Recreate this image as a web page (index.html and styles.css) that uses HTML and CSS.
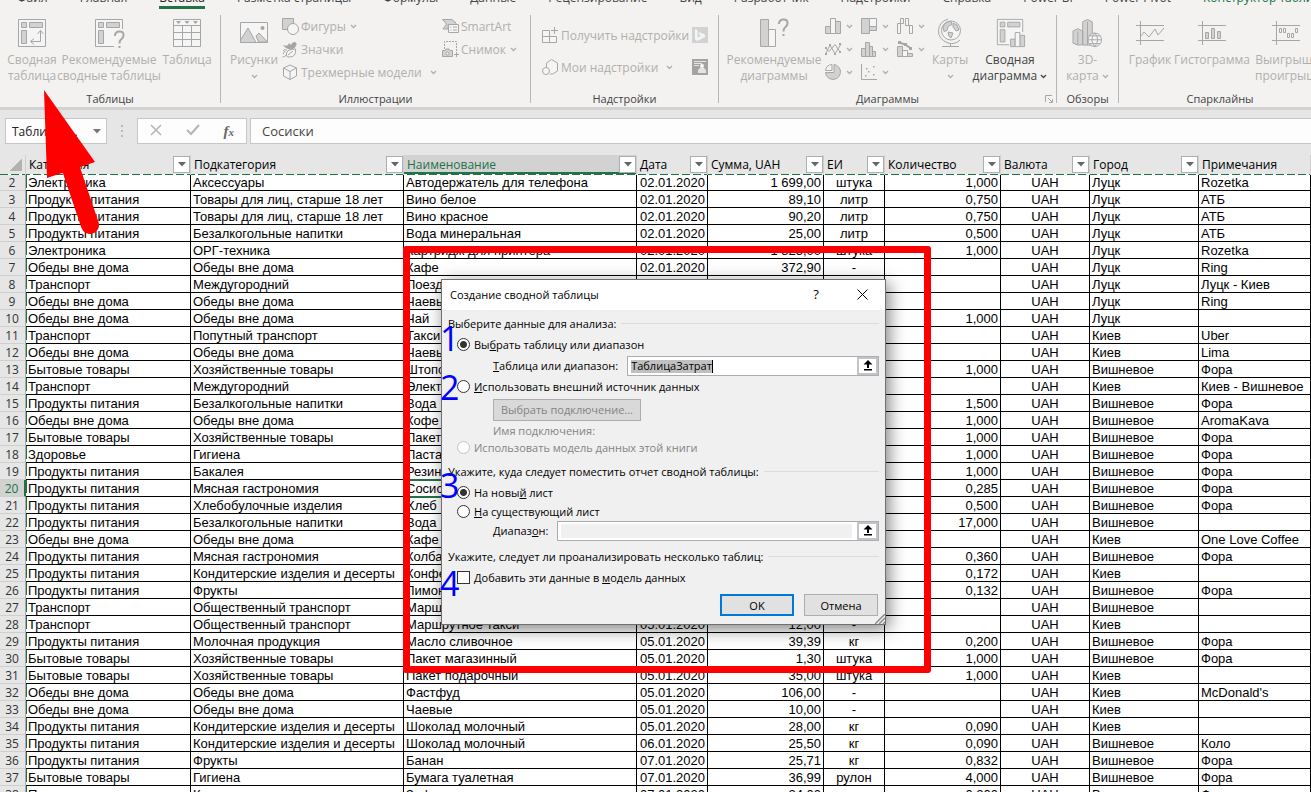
FILE: index.html
```html
<!DOCTYPE html>
<html lang="ru">
<head>
    <meta charset="UTF-8">
    <meta name="viewport" content="width=device-width, initial-scale=1.0">
    <title>Создание сводной таблицы</title>
    <link rel="stylesheet" href="styles.css">
</head>
<body>
    <svg class="defs" aria-hidden="true">
        <symbol id="chev" viewBox="0 0 7 5"><path d="M1 1l2.5 2.5L6 1" fill="none" stroke="currentColor" stroke-width="1.3"/></symbol>
        <symbol id="tri" viewBox="0 0 8 5"><path d="M0 0h8L4 4.500z" fill="currentColor"/></symbol>
        <symbol id="pick" viewBox="0 0 10 11"><path d="M5 0L.5 4.500H4V8h2V4.500h3.500zM1 9h8v1.500H1z" fill="#000"/></symbol>
    </svg>

    <nav class="tabs">
        <a href="#">Файл</a>
        <a href="#">Главная</a>
        <a href="#" class="current">Вставка</a>
        <a href="#">Разметка страницы</a>
        <a href="#">Формулы</a>
        <a href="#">Данные</a>
        <a href="#">Рецензирование</a>
        <a href="#">Вид</a>
        <a href="#">Разработчик</a>
        <a href="#">Надстройки</a>
        <a href="#">Справка</a>
        <a href="#">Power BI</a>
        <a href="#">Power Pivot</a>
        <a href="#" class="context">Конструктор таблиц</a>
    </nav>

    <div class="ribbon">
        <section class="group tables">
            <div class="tools">
                <button class="big" disabled>
                    <svg width="30" height="30" viewBox="0 0 30 30"><path class="p" d="M1.500 1.500h27v27h-27z"/><path class="f" d="M4.500 4.500h5v5h-5zM12.500 4.500h13v5h-13zM4.500 12.500h5v13h-5z"/><path class="l" d="M23.500 13v10.500H14M20.500 16l3-3.500 3 3.500M17 20.500l-3.500 3 3.500 3"/></svg>
                    <span>Сводная таблица</span>
                </button>
                <button class="big" disabled>
                    <svg width="30" height="30" viewBox="0 0 30 30"><path class="p" d="M20 28.500H1.500v-27h27V11"/><path class="f" d="M4.500 4.500h5v5h-5zM12.500 4.500h13v5h-13zM4.500 12.500h5v13h-5z"/><path class="l w" d="M21 18q0-4.500 4.500-4.500t4 4q0 2-2.500 4-1.500 1-1.500 4M25.500 28v2"/></svg>
                    <span>Рекомендуемые сводные таблицы</span>
                </button>
                <button class="big" disabled>
                    <svg width="30" height="30" viewBox="0 0 30 30"><path class="p" d="M1.500 1.500h27v27h-27zM1.500 7.500h27M1.500 14.500h27M1.500 21.500h27M10.500 7.500v21M19.500 7.500v21"/><path class="s" d="M4 3h5L6.500 6zM12.500 3h5L15 6zM21 3h5l-2.500 3z"/></svg>
                    <span>Таблица</span>
                </button>
            </div>
            <h2>Таблицы</h2>
        </section>

        <section class="group pictures">
            <div class="tools">
                <button class="big" disabled>
                    <svg width="30" height="30" viewBox="0 0 30 30"><path class="p" d="M1.500 4.500h27v20h-27z"/><path class="f" d="M1.500 22L9 10l8 14.500H1.500zM17 18l3-3 8.500 9h-9z"/><circle class="s" cx="23.500" cy="10" r="2"/></svg>
                    <span>Рисунки</span>
                    <svg class="chev"><use href="#chev"/></svg>
                </button>
                <div class="stack">
                    <button disabled><svg width="17" height="17" viewBox="0 0 17 17"><path class="f" d="M.5.5h11v11H.5z"/><circle class="p" cx="11" cy="11" r="5.500"/></svg>Фигуры<svg class="chev"><use href="#chev"/></svg></button>
                    <button disabled><svg width="17" height="17" viewBox="0 0 17 17"><path class="s" d="M7 2l2 2q1-3 4-3 2 1 1.500 3-1 3-4 4Q4 9 1 4q3 1 5 0z"/><path class="p" d="M4.500 15Q3 8 13.500 8q1 8-6 8-2 0-3-1zM6 14l5-4"/><path class="l" d="M.5 16q2 0 4-2M1 10q1-2 4-1M1 13l2-3"/></svg>Значки</button>
                    <button disabled><svg width="17" height="17" viewBox="0 0 17 17"><path class="p" d="M8 1l6.500 3v8L8 15.500 1.500 12V4zM1.500 4L8 7.500 14.500 4M8 7.500v8"/></svg>Трехмерные модели<svg class="chev far"><use href="#chev"/></svg></button>
                </div>
                <div class="stack">
                    <button disabled><svg width="17" height="17" viewBox="0 0 17 17"><path class="f" d="M.5 1.500H10L14 5v2H6v4H1l3.500-5z"/><path class="p" d="M6.500 6.500h10v8h-10zM8.500 9h1M11 9h4M8.500 12h1M11 12h4"/></svg>SmartArt</button>
                    <button disabled><svg width="17" height="17" viewBox="0 0 17 17"><path class="l" d="M2.500 8V.5h12v10" stroke-dasharray="2 1"/><path class="f" d="M.5 9.500H3L4 8h3l1 1.500h2.500v6H.5z"/><circle class="p" cx="5.500" cy="12.500" r="1.500"/><path class="l" d="M14.500 11v5M12 13.500h5"/></svg>Снимок<svg class="chev"><use href="#chev"/></svg></button>
                </div>
            </div>
            <h2>Иллюстрации</h2>
        </section>

        <section class="group addins">
            <div class="tools">
                <button disabled><svg width="17" height="17" viewBox="0 0 17 17"><path class="p" d="M.5 3.500h7v6h-7zM.5 9.500h7v6h-7zM7.500 9.500h7v6h-7z"/><path class="l" d="M12.500 0v7M9 3.500h7"/></svg>Получить надстройки</button>
                <button disabled aria-label="Карты Bing"><svg width="16" height="16" viewBox="0 0 16 16"><path fill="#d2d2d2" d="M0 0h16v16H0z"/><path fill="#f5f5f5" d="M3 2l2.500 1v7.500L9 9 7.500 8l-1-3L13 7.500V10l-7.500 4L3 12.500z"/></svg></button>
                <button disabled><svg width="17" height="17" viewBox="0 0 17 17"><path class="p" d="M4.500 8V4l5-3.500L15.500 4v8l-5 3H8"/><circle class="p" cx="4" cy="12" r="3.500"/></svg>Мои надстройки<svg class="chev far"><use href="#chev"/></svg></button>
                <button disabled aria-label="Люди"><svg width="16" height="16" viewBox="0 0 16 16"><path fill="#a3a3a3" d="M0 0h16v16H0z"/><path fill="#e4e4e4" d="M2 2h12v1H2zM2 4h8v1H2zM2 6h5v1H2zM6 14v-3l2-2h4l2 2v3z"/><circle fill="#fff" cx="10" cy="7" r="2"/></svg></button>
            </div>
            <h2>Надстройки</h2>
        </section>

        <section class="group charts">
            <div class="tools">
                <button class="big" disabled>
                    <svg width="30" height="30" viewBox="0 0 30 30"><path class="f" d="M1.500 1.500h8v27h-8z"/><path class="p" d="M9.500 11.500h7v17h-7z"/><path class="l w" d="M20 6q0-4.500 4.500-4.500t4 4q0 2-2.500 4-1.500 1-1.500 4M24.500 16v2"/></svg>
                    <span>Рекомендуемые диаграммы</span>
                </button>
                <div class="minis">
                    <button disabled aria-label="Гистограмма"><svg width="17" height="17" viewBox="0 0 17 17"><path class="f" d="M.5 8.500h5v7h-5zM10.500 3.500h5v12h-5z"/><path class="p" d="M5.500.5h5v15h-5z"/></svg><svg class="chev"><use href="#chev"/></svg></button>
                    <button disabled aria-label="Иерархическая"><svg width="17" height="17" viewBox="0 0 17 17"><path class="f" d="M.5.5h8v15h-8z"/><path class="p" d="M8.500.5h7v8h-7z"/><path class="f" d="M8.500 8.500h7v4h-7z"/></svg><svg class="chev"><use href="#chev"/></svg></button>
                    <button disabled aria-label="Каскадная"><svg width="17" height="17" viewBox="0 0 17 17"><path class="p" d="M.5 15.500v-10h3V.5h3v5h-3v10zM8.500.5h3v7h4v8h-3v-8h-4z"/></svg><svg class="chev"><use href="#chev"/></svg></button>
                    <button disabled aria-label="График"><svg width="17" height="17" viewBox="0 0 17 17"><path class="l" d="M.5 13L5 4l5 9 6-10"/><path class="l" d="M.5 7L4 10.500l6-7 5.500 8"/><path class="s" d="M0 12h2v2H0zM4 3h2v2H4zM9 12h2v2H9zM14 2h2v2h-2zM0 6h2v2H0zM14 10h2v2h-2z"/></svg><svg class="chev"><use href="#chev"/></svg></button>
                    <button disabled aria-label="Статистическая"><svg width="17" height="17" viewBox="0 0 17 17"><path class="f" d="M.5 7.500h4v8h-4zM4.500 1.500h4v14h-4zM8.500 5.500h3v10h-3zM11.500 10.500h3v5h-3z"/></svg><svg class="chev"><use href="#chev"/></svg></button>
                    <button disabled aria-label="Комбинированная"><svg width="17" height="17" viewBox="0 0 17 17"><path class="f" d="M.5 5.500h5v10h-5zM10.500 12.500h5v3h-5z"/><path class="p" d="M5.500 9.500h5v6h-5z"/><path class="l w" d="M2 1.500l6 2 6 4"/><path class="s" d="M1 0h3v3H1zM7 2h3v3H7zM12 6h3v3h-3z"/></svg><svg class="chev"><use href="#chev"/></svg></button>
                    <button disabled aria-label="Круговая"><svg width="17" height="17" viewBox="0 0 17 17"><path class="f" d="M9 .5a7.500 7.500 0 1 1-8.500 8H9z"/><path class="p" d="M7 .5v6H.5Q1 1 7 .5z"/></svg><svg class="chev"><use href="#chev"/></svg></button>
                    <button disabled aria-label="Точечная"><svg width="17" height="17" viewBox="0 0 17 17"><path class="l" d="M.5 0v15.500H16"/><path class="s" d="M4 11h1.500v1.500H4zM7 7h1.500v1.500H7zM5 4h1.500v1.500H5zM12 2h1.500v1.500H12zM12 10h1.500v1.500H12z"/></svg><svg class="chev"><use href="#chev"/></svg></button>
                </div>
                <button class="big" disabled>
                    <svg width="30" height="30" viewBox="0 0 30 30"><circle class="p" cx="16" cy="12.500" r="9.500"/><path class="f" d="M8 9q3-6 8-5.500l1 3-4 2-1 4-3 1zM18 5l4 2 2 5-3 1-3-4zM13 14l5 1-2 5q-3-1-3-6z"/><path class="l" d="M13 1Q4 4 3.500 12.500T13 25q7 2 12-3M15.500 25v3M7 28.500h17"/></svg>
                    <span>Карты</span>
                    <svg class="chev"><use href="#chev"/></svg>
                </button>
                <button class="big dark">
                    <svg width="31" height="32" viewBox="0 0 31 32"><path class="p" d="M14 28.500H1.500v-27h27V15"/><path class="f" d="M4.500 4.500h5v5h-5zM12.500 4.500h13v5h-13zM4.500 12.500h5v13h-5zM15.500 22.500h5v8h-5zM25.500 18.500h5v12h-5z"/><path class="p" d="M20.500 15.500h5v15h-5z"/></svg>
                    <span>Сводная диаграмма&nbsp;<svg class="chev"><use href="#chev"/></svg></span>
                </button>
            </div>
            <h2>Диаграммы</h2>
            <button class="launcher" aria-label="Все диаграммы"><svg width="8" height="8" viewBox="0 0 8 8"><path class="l" d="M.5 7V.5H7M3 3l4 4M7.500 4v3.500H4"/></svg></button>
        </section>

        <section class="group tours">
            <div class="tools">
                <button class="big" disabled>
                    <svg width="31" height="31" viewBox="0 0 31 31"><path class="f" d="M.5 13.500l5-2.500 5 2.500v14l-5 .5-5-2zM10.500 4l5-2.500 5 2.500v24h-10z"/><path class="l" d="M5.500 14v14M15.500 4v24"/><circle class="p" cx="23" cy="22.500" r="7"/><path class="l" d="M16 22.500h14M17.500 18.500h11M17.500 26.500h11M23 15.500q-6 7 0 14 6-7 0-14z"/></svg>
                    <span>3D-<br>карта&nbsp;<svg class="chev"><use href="#chev"/></svg></span>
                </button>
            </div>
            <h2>Обзоры</h2>
        </section>

        <section class="group sparks">
            <div class="tools">
                <button class="big" disabled>
                    <svg width="30" height="30" viewBox="0 0 30 30"><path class="l" d="M1 7.500h28M1 22.500h28M5.500 3v24M6 18l3-4 5 5 6-8 3 6 6-7"/></svg>
                    <span>График</span>
                </button>
                <button class="big" disabled>
                    <svg width="30" height="30" viewBox="0 0 30 30"><path class="l" d="M1 7.500h28M1 22.500h28M5.500 3v24"/><path class="f" d="M8.500 14.500h3v6h-3zM14.500 10.500h3v10h-3zM20.500 13.500h3v7h-3z"/></svg>
                    <span>Гистограмма</span>
                </button>
                <button class="big" disabled>
                    <svg width="30" height="30" viewBox="0 0 30 30"><path class="l" d="M1 7.500h28M1 22.500h28M5.500 3v24M8.500 10.500h2v4h-2zM12.500 10.500h2v4h-2zM16.500 15.500h2v4h-2zM20.500 15.500h2v4h-2zM24.500 10.500h2v4h-2z"/></svg>
                    <span>Выигрыш/ проигрыш</span>
                </button>
            </div>
            <h2>Спарклайны</h2>
        </section>
    </div>

    <div class="formula-bar">
        <div class="name-box">
            <input type="text" value="ТаблицаЗ..." aria-label="Имя">
            <button aria-label="Список имен"><svg width="8" height="5"><use href="#tri"/></svg></button>
        </div>
        <span class="grip"></span>
        <div class="fx-buttons">
            <button aria-label="Отмена ввода" disabled><svg width="12" height="12" viewBox="0 0 12 12"><path d="M1 1l10 10M11 1L1 11" stroke="#b5b5b5" stroke-width="1.500"/></svg></button>
            <button aria-label="Ввод" disabled><svg width="14" height="12" viewBox="0 0 14 12"><path d="M1 6l4 4 8-9" fill="none" stroke="#b5b5b5" stroke-width="2"/></svg></button>
            <button class="fx" aria-label="Вставить функцию">f<small>x</small></button>
        </div>
        <input class="formula" type="text" value="Сосиски" aria-label="Строка формул">
    </div>

    <table class="sheet">
        <colgroup>
            <col class="c-num"><col class="c-cat"><col class="c-sub"><col class="c-name"><col class="c-date"><col class="c-sum"><col class="c-unit"><col class="c-qty"><col class="c-cur"><col class="c-city"><col>
        </colgroup>
        <thead>
            <tr>
                <th class="corner"></th>
                <th><div>Категория<button aria-label="Фильтр"><svg width="8" height="5"><use href="#tri"/></svg></button></div></th>
                <th><div>Подкатегория<button aria-label="Фильтр"><svg width="8" height="5"><use href="#tri"/></svg></button></div></th>
                <th class="active"><div>Наименование<button aria-label="Фильтр"><svg width="8" height="5"><use href="#tri"/></svg></button></div></th>
                <th><div>Дата<button aria-label="Фильтр"><svg width="8" height="5"><use href="#tri"/></svg></button></div></th>
                <th><div>Сумма, UAH<button aria-label="Фильтр"><svg width="8" height="5"><use href="#tri"/></svg></button></div></th>
                <th><div>ЕИ<button aria-label="Фильтр"><svg width="8" height="5"><use href="#tri"/></svg></button></div></th>
                <th><div>Количество<button aria-label="Фильтр"><svg width="8" height="5"><use href="#tri"/></svg></button></div></th>
                <th><div>Валюта<button aria-label="Фильтр"><svg width="8" height="5"><use href="#tri"/></svg></button></div></th>
                <th><div>Город<button aria-label="Фильтр"><svg width="8" height="5"><use href="#tri"/></svg></button></div></th>
                <th><div>Примечания</div></th>
            </tr>
        </thead>
        <tbody>
            <tr><th>2</th><td>Электроника</td><td>Аксессуары</td><td>Автодержатель для телефона</td><td>02.01.2020</td><td>1 699,00</td><td>штука</td><td>1,000</td><td>UAH</td><td>Луцк</td><td>Rozetka</td></tr>
            <tr><th>3</th><td>Продукты питания</td><td>Товары для лиц, старше 18 лет</td><td>Вино белое</td><td>02.01.2020</td><td>89,10</td><td>литр</td><td>0,750</td><td>UAH</td><td>Луцк</td><td>АТБ</td></tr>
            <tr><th>4</th><td>Продукты питания</td><td>Товары для лиц, старше 18 лет</td><td>Вино красное</td><td>02.01.2020</td><td>90,20</td><td>литр</td><td>0,750</td><td>UAH</td><td>Луцк</td><td>АТБ</td></tr>
            <tr><th>5</th><td>Продукты питания</td><td>Безалкогольные напитки</td><td>Вода минеральная</td><td>02.01.2020</td><td>25,00</td><td>литр</td><td>0,500</td><td>UAH</td><td>Луцк</td><td>АТБ</td></tr>
            <tr><th>6</th><td>Электроника</td><td>ОРГ-техника</td><td>Картридж для принтера</td><td>02.01.2020</td><td>1 825,00</td><td>штука</td><td>1,000</td><td>UAH</td><td>Луцк</td><td>Rozetka</td></tr>
            <tr><th>7</th><td>Обеды вне дома</td><td>Обеды вне дома</td><td>Кафе</td><td>02.01.2020</td><td>372,90</td><td>-</td><td></td><td>UAH</td><td>Луцк</td><td>Ring</td></tr>
            <tr><th>8</th><td>Транспорт</td><td>Междугородний</td><td>Поезд</td><td>02.01.2020</td><td>153,70</td><td>-</td><td></td><td>UAH</td><td>Луцк</td><td>Луцк - Киев</td></tr>
            <tr><th>9</th><td>Обеды вне дома</td><td>Обеды вне дома</td><td>Чаевые</td><td></td><td></td><td></td><td></td><td>UAH</td><td>Луцк</td><td>Ring</td></tr>
            <tr><th>10</th><td>Обеды вне дома</td><td>Обеды вне дома</td><td>Чай</td><td></td><td></td><td></td><td>1,000</td><td>UAH</td><td>Луцк</td><td></td></tr>
            <tr><th>11</th><td>Транспорт</td><td>Попутный транспорт</td><td>Такси</td><td></td><td></td><td></td><td></td><td>UAH</td><td>Киев</td><td>Uber</td></tr>
            <tr><th>12</th><td>Обеды вне дома</td><td>Обеды вне дома</td><td>Чаевые</td><td></td><td></td><td></td><td></td><td>UAH</td><td>Киев</td><td>Lima</td></tr>
            <tr><th>13</th><td>Бытовые товары</td><td>Хозяйственные товары</td><td>Штопор</td><td></td><td></td><td></td><td>1,000</td><td>UAH</td><td>Вишневое</td><td>Фора</td></tr>
            <tr><th>14</th><td>Транспорт</td><td>Междугородний</td><td>Электричка</td><td></td><td></td><td></td><td></td><td>UAH</td><td>Киев</td><td>Киев - Вишневое</td></tr>
            <tr><th>15</th><td>Продукты питания</td><td>Безалкогольные напитки</td><td>Вода</td><td></td><td></td><td></td><td>1,500</td><td>UAH</td><td>Вишневое</td><td>Фора</td></tr>
            <tr><th>16</th><td>Обеды вне дома</td><td>Обеды вне дома</td><td>Кофе</td><td></td><td></td><td></td><td>1,000</td><td>UAH</td><td>Вишневое</td><td>AromaKava</td></tr>
            <tr><th>17</th><td>Бытовые товары</td><td>Хозяйственные товары</td><td>Пакет</td><td></td><td></td><td></td><td>1,000</td><td>UAH</td><td>Вишневое</td><td>Фора</td></tr>
            <tr><th>18</th><td>Здоровье</td><td>Гигиена</td><td>Паста</td><td></td><td></td><td></td><td>1,000</td><td>UAH</td><td>Вишневое</td><td>Фора</td></tr>
            <tr><th>19</th><td>Продукты питания</td><td>Бакалея</td><td>Резинка</td><td></td><td></td><td></td><td>1,000</td><td>UAH</td><td>Вишневое</td><td>Фора</td></tr>
            <tr class="active"><th>20</th><td>Продукты питания</td><td>Мясная гастрономия</td><td class="cursor">Сосиски</td><td></td><td></td><td></td><td>0,285</td><td>UAH</td><td>Вишневое</td><td>Фора</td></tr>
            <tr><th>21</th><td>Продукты питания</td><td>Хлебобулочные изделия</td><td>Хлеб</td><td></td><td></td><td></td><td>0,500</td><td>UAH</td><td>Вишневое</td><td>Фора</td></tr>
            <tr><th>22</th><td>Продукты питания</td><td>Безалкогольные напитки</td><td>Вода</td><td></td><td></td><td></td><td>17,000</td><td>UAH</td><td>Вишневое</td><td></td></tr>
            <tr><th>23</th><td>Обеды вне дома</td><td>Обеды вне дома</td><td>Кафе</td><td></td><td></td><td></td><td></td><td>UAH</td><td>Киев</td><td>One Love Coffee</td></tr>
            <tr><th>24</th><td>Продукты питания</td><td>Мясная гастрономия</td><td>Колбаса</td><td></td><td></td><td></td><td>0,360</td><td>UAH</td><td>Вишневое</td><td>Фора</td></tr>
            <tr><th>25</th><td>Продукты питания</td><td>Кондитерские изделия и десерты</td><td>Конфеты</td><td></td><td></td><td></td><td>0,172</td><td>UAH</td><td>Киев</td><td></td></tr>
            <tr><th>26</th><td>Продукты питания</td><td>Фрукты</td><td>Лимон</td><td></td><td></td><td></td><td>0,132</td><td>UAH</td><td>Вишневое</td><td>Фора</td></tr>
            <tr><th>27</th><td>Транспорт</td><td>Общественный транспорт</td><td>Маршрутное такси</td><td></td><td></td><td></td><td></td><td>UAH</td><td>Вишневое</td><td></td></tr>
            <tr><th>28</th><td>Транспорт</td><td>Общественный транспорт</td><td>Маршрутное такси</td><td>05.01.2020</td><td>12,00</td><td>-</td><td></td><td>UAH</td><td>Киев</td><td></td></tr>
            <tr><th>29</th><td>Продукты питания</td><td>Молочная продукция</td><td>Масло сливочное</td><td>05.01.2020</td><td>39,39</td><td>кг</td><td>0,200</td><td>UAH</td><td>Вишневое</td><td>Фора</td></tr>
            <tr><th>30</th><td>Бытовые товары</td><td>Хозяйственные товары</td><td>Пакет магазинный</td><td>05.01.2020</td><td>1,30</td><td>штука</td><td>1,000</td><td>UAH</td><td>Вишневое</td><td>Фора</td></tr>
            <tr><th>31</th><td>Бытовые товары</td><td>Хозяйственные товары</td><td>Пакет подарочный</td><td>05.01.2020</td><td>35,00</td><td>штука</td><td>1,000</td><td>UAH</td><td>Киев</td><td></td></tr>
            <tr><th>32</th><td>Обеды вне дома</td><td>Обеды вне дома</td><td>Фастфуд</td><td>05.01.2020</td><td>106,00</td><td>-</td><td></td><td>UAH</td><td>Киев</td><td>McDonald's</td></tr>
            <tr><th>33</th><td>Обеды вне дома</td><td>Обеды вне дома</td><td>Чаевые</td><td>05.01.2020</td><td>10,00</td><td>-</td><td></td><td>UAH</td><td>Киев</td><td></td></tr>
            <tr><th>34</th><td>Продукты питания</td><td>Кондитерские изделия и десерты</td><td>Шоколад молочный</td><td>05.01.2020</td><td>28,00</td><td>кг</td><td>0,090</td><td>UAH</td><td>Киев</td><td></td></tr>
            <tr><th>35</th><td>Продукты питания</td><td>Кондитерские изделия и десерты</td><td>Шоколад молочный</td><td>06.01.2020</td><td>25,50</td><td>кг</td><td>0,090</td><td>UAH</td><td>Вишневое</td><td>Коло</td></tr>
            <tr><th>36</th><td>Продукты питания</td><td>Фрукты</td><td>Банан</td><td>07.01.2020</td><td>25,71</td><td>кг</td><td>0,832</td><td>UAH</td><td>Вишневое</td><td>Фора</td></tr>
            <tr><th>37</th><td>Бытовые товары</td><td>Гигиена</td><td>Бумага туалетная</td><td>07.01.2020</td><td>36,99</td><td>рулон</td><td>4,000</td><td>UAH</td><td>Вишневое</td><td>Фора</td></tr>
            <tr><th>38</th><td>Продукты питания</td><td>Кондитерские изделия и десерты</td><td>Зефир</td><td>07.01.2020</td><td>24,00</td><td>кг</td><td>0,200</td><td>UAH</td><td>Вишневое</td><td>Фора</td></tr>
        </tbody>
    </table>

    <form class="dialog" role="dialog" aria-labelledby="dialogTitle">
        <header>
            <h1 id="dialogTitle">Создание сводной таблицы</h1>
            <button type="button" aria-label="Справка">?</button>
            <button type="button" aria-label="Закрыть"><svg width="11" height="11" viewBox="0 0 11 11"><path d="M.5.5l10 10M10.500.5l-10 10" stroke="#000"/></svg></button>
        </header>
        <div class="content">
            <section>
                <h3>Выберите данные для анализа:</h3>
                <label class="row"><input type="radio" name="source" checked><span>Вы<u>б</u>рать таблицу или диапазон</span></label>
                <div class="row sub">
                    <label for="range"><u>Т</u>аблица или диапазон:</label>
                    <div class="ref"><input id="range" class="selected" type="text" value="ТаблицаЗатрат"><button type="button" aria-label="Свернуть"><svg width="10" height="11"><use href="#pick"/></svg></button></div>
                </div>
                <label class="row"><input type="radio" name="source"><span><u>И</u>спользовать внешний источник данных</span></label>
                <div class="row sub tall"><button type="button" class="push" disabled>Выбрать подключение...</button></div>
                <div class="row sub low off">Имя подключения:</div>
                <label class="row low off"><input type="radio" name="source" disabled><span>Использовать модель данных этой книги</span></label>
            </section>
            <section>
                <h3>Укажите, куда следует поместить отчет сводной таблицы:</h3>
                <label class="row"><input type="radio" name="place" checked><span>На новы<u>й</u> лист</span></label>
                <label class="row low"><input type="radio" name="place"><span><u>Н</u>а существующий лист</span></label>
                <div class="row sub">
                    <label for="place">Диапаз<u>о</u>н:</label>
                    <div class="ref"><input id="place" class="empty" type="text"><button type="button" aria-label="Свернуть"><svg width="10" height="11"><use href="#pick"/></svg></button></div>
                </div>
            </section>
            <section>
                <h3>Укажите, следует ли проанализировать несколько таблиц:</h3>
                <label class="row"><input type="checkbox"><span>Добавить эти данные в <u>м</u>одель данных</span></label>
            </section>
            <footer>
                <button type="button" class="push ok">OK</button>
                <button type="button" class="push">Отмена</button>
            </footer>
        </div>
        <svg class="resize" width="10" height="10" viewBox="0 0 10 10"><path d="M0 10L10 0M4 10l6-6M8 10l2-2" stroke="#8a8a8a" stroke-width="1.500"/></svg>
    </form>

    <!-- tutorial marks drawn over the window -->
    <div class="mark-frame"></div>
    <svg class="mark-arrow" width="60" height="146" viewBox="0 0 60 146"><path d="M4 0l51 72L7 88z" fill="#f00"/><path d="M30 76l20 59" stroke="#f00" stroke-width="18" stroke-linecap="round"/></svg>
    <span class="mark-step one">1</span>
    <span class="mark-step two">2</span>
    <span class="mark-step three">3</span>
    <span class="mark-step four">4</span>
</body>
</html>
```

FILE: styles.css
```css
* {
    box-sizing: border-box;
}
body {
    margin: 0;
    height: 100vh;
    position: relative;
    overflow: hidden;
    background: #e6e6e6;
    font-family: "Open Sans", "Noto Sans", sans-serif;
    font-size: 12px;
    color: #444;
}
button, input {
    font: inherit;
    color: inherit;
    margin: 0;
}
button {
    background: none;
    border: 0;
    padding: 0;
}
svg {
    flex: none;
}
.defs {
    display: none;
}

/* tabs */
.tabs {
    display: flex;
    align-items: flex-end;
    gap: 32px;
    height: 9px;
    padding-left: 17px;
    overflow: hidden;
    background: #f3f2f1;
}
.tabs a {
    flex: none;
    color: #444;
    text-decoration: none;
    line-height: 16px;
    border-bottom: 3px solid transparent;
}
.tabs .current {
    border-color: #217346;
    color: #222;
}
.tabs .context {
    color: #217346;
}

/* ribbon */
.ribbon {
    display: flex;
    height: 101px;
    padding: 6px 0 4px;
    overflow: hidden;
    background: #f3f2f1;
    border-bottom: 3px solid #d2d2d2;
}
.group {
    flex: none;
    position: relative;
    display: flex;
    flex-direction: column;
    justify-content: space-between;
    border-right: 1px solid #b8b6b4;
}
.group h2 {
    margin: 0;
    font-size: 11px;
    font-weight: normal;
    line-height: 8px;
    text-align: center;
}
.group button {
    display: flex;
    align-items: center;
    gap: 2px;
    color: #b1afad;
    white-space: nowrap;
}
.group .tools {
    display: grid;
    align-items: start;
}
.group .big {
    flex-direction: column;
    gap: 0;
    padding-top: 3px;
    line-height: 16px;
    white-space: normal;
}
.big > svg:first-child {
    height: 30px;
    margin-bottom: 4px;
    overflow: visible;
}
.big > .chev {
    margin-top: 6px;
}
.group .dark {
    color: #444;
}
.chev {
    width: 7px;
    height: 5px;
    margin-left: 2px;
}
.big .chev {
    margin-left: 0;
    vertical-align: middle;
}
.chev.far {
    margin-left: 6px;
}
.tables .tools {
    grid-template-columns: 46px 108px 48px;
    padding: 0 9px;
}
.pictures .tools {
    grid-template-columns: 48px 156px 78px;
    gap: 4px;
    padding: 0 10px 0 9px;
}
.addins .tools {
    grid-template-columns: 146px 16px;
    gap: 16px 4px;
    padding: 12px 10px 0 11px;
}
.addins .tools button {
    height: 16px;
}
.charts .tools {
    grid-template-columns: 92px 108px 36px 80px;
    column-gap: 2px;
    padding: 0 6px 0 9px;
}
.tours .tools {
    grid-template-columns: 61px;
}
.sparks .tools {
    grid-template-columns: 46px 78px 70px;
    padding-left: 8px;
}
.stack {
    display: grid;
}
.stack button {
    height: 23px;
}
.minis {
    display: grid;
    grid-template-columns: repeat(3, 36px);
    grid-auto-rows: 23px;
    padding-left: 3px;
}
.launcher {
    position: absolute;
    right: 3px;
    bottom: 0;
}
.p, .f, .l {
    stroke: #a6a6a6;
}
.p {
    fill: #f5f5f5;
}
.f {
    fill: #d2d2d2;
}
.l {
    fill: none;
}
.s {
    fill: #a6a6a6;
}
.w {
    stroke-width: 2;
}

/* formula bar */
.formula-bar {
    display: flex;
    height: 45px;
    padding: 8px 0 11px 5px;
    font-size: 13px;
}
.formula-bar > div, .formula {
    display: flex;
    align-items: center;
    background: #fdfdfd;
    border: 1px solid #c6c6c6;
}
.name-box {
    width: 102px;
    padding-right: 5px;
    color: #222;
}
.name-box input {
    flex: 1;
    min-width: 0;
    border: 0;
    padding: 0 0 0 6px;
    background: none;
    font-size: 12px;
}
.name-box svg {
    color: #777;
    display: block;
}
.grip {
    width: 2px;
    margin: 7px 14px;
    background: repeating-linear-gradient(#b8b8b8 0 2px, transparent 2px 5px);
}
.fx-buttons {
    width: 110px;
    justify-content: space-around;
}
.fx {
    font-family: "Liberation Serif", serif;
    font-style: italic;
    font-weight: bold;
    font-size: 15px;
    color: #666;
}
.fx small {
    font-size: 11px;
}
.formula {
    flex: 1;
    margin-left: 3px;
    padding: 0 11px;
    border-right: 0;
}

/* sheet */
.sheet {
    width: 100%;
    table-layout: fixed;
    border-collapse: separate;
    border-spacing: 0;
    background: #fff;
    font-family: "Liberation Sans", Arial, sans-serif;
    font-size: 13px;
    color: #000;
}
.c-num { width: 26px; }
.c-cat { width: 165px; }
.c-sub { width: 213px; }
.c-name { width: 233px; }
.c-date { width: 71px; }
.c-sum { width: 116px; }
.c-unit { width: 61px; }
.c-qty { width: 116px; }
.c-cur { width: 89px; }
.c-city { width: 109px; }
.sheet td, .sheet th {
    padding: 1px 2px 0;
    height: 17px;
    line-height: 15px;
    white-space: nowrap;
    overflow: hidden;
    font-weight: normal;
}
.sheet td {
    border-right: 1px solid #000;
    border-bottom: 1px solid #000;
}
.sheet td:nth-child(2) {
    background: repeating-linear-gradient(#217346 0 13px, #fff 13px 17px) 0 0 / 1px 100% no-repeat;
}
.sheet td:nth-child(5), .sheet td:nth-child(6), .sheet td:nth-child(8) {
    text-align: right;
}
.sheet td:nth-child(7), .sheet td:nth-child(9) {
    text-align: center;
}
.sheet tbody th {
    padding: 1px 1px 0 0;
    background: #e6e6e6;
    border-right: 1px solid #ababab;
    border-bottom: 1px solid #cfcfcf;
    font-family: "Open Sans", "Noto Sans", sans-serif;
    font-size: 12px;
    color: #333;
    text-align: center;
}
.sheet tbody tr:first-child > * {
    height: 16px;
    padding-top: 0;
}
.sheet thead tr {
    background: repeating-linear-gradient(90deg, #217346 0 8px, #fff 8px 11px) 0 19px / 100% 1px no-repeat #e6e6e6;
}
.sheet thead th {
    height: 20px;
    padding: 0 0 2px 3px;
    border-right: 1px solid #cfcfcf;
    font-family: "Open Sans", "Noto Sans", sans-serif;
    font-size: 12px;
    text-align: left;
}
.sheet thead div {
    display: flex;
    align-items: center;
    justify-content: space-between;
    height: 18px;
}
.sheet thead button {
    display: grid;
    place-items: center;
    width: 17px;
    height: 17px;
    background: #fff;
    border: 1px solid #a9afb5;
    color: #666;
}
.sheet thead .active {
    background: linear-gradient(#217346, #217346) 0 17px / 100% 2px no-repeat,
        linear-gradient(#d2d2d2, #d2d2d2) 0 0 / 100% 18px no-repeat;
    color: #217346;
}
.sheet .corner {
    background: linear-gradient(135deg, transparent 50%, #b2b2b2 50%) 10px 4px / 12px 12px no-repeat;
}
.sheet .active th {
    background: #d2d2d2;
    border-right: 2px solid #217346;
    color: #217346;
}
.sheet .cursor {
    outline: 2px solid #217346;
    outline-offset: -1px;
}

/* dialog */
.dialog {
    position: absolute;
    left: 441px;
    top: 279px;
    width: 445px;
    background: #f0f0f0;
    border: 1px solid #707070;
    box-shadow: 3px 4px 16px rgba(0, 0, 0, 0.5);
    font-size: 11px;
    color: #000;
}
.dialog header {
    display: flex;
    align-items: center;
    height: 30px;
    padding: 0 0 2px 8px;
    background: #fff;
}
.dialog h1 {
    flex: 1;
    margin: 0;
    font-size: 11px;
    font-weight: normal;
}
.dialog header button {
    display: grid;
    place-items: center;
    width: 46px;
    height: 28px;
    font-size: 13px;
}
.dialog .content {
    padding: 3px 6px 8px;
}
.dialog section {
    margin-bottom: 5px;
}
.dialog h3 {
    display: flex;
    align-items: center;
    gap: 5px;
    margin: 0;
    height: 21px;
    font-size: 11px;
    font-weight: normal;
}
.dialog h3::after {
    content: "";
    flex: 1;
    border-top: 1px solid #dcdcdc;
}
.row {
    display: flex;
    align-items: center;
    gap: 4px;
    height: 21px;
    padding-left: 9px;
}
.row.sub {
    padding-left: 45px;
    gap: 9px;
}
.row.tall {
    height: 25px;
}
.row.low {
    height: 17px;
}
.off {
    color: #838383;
}
.row input[type="radio"], .row input[type="checkbox"] {
    appearance: none;
    flex: none;
    width: 13px;
    height: 13px;
    background: #fff;
    border: 1px solid #333;
}
.row input[type="radio"] {
    border-radius: 50%;
}
.row input[type="radio"]:checked {
    background: radial-gradient(circle, #333 0 3px, #fff 4px);
}
.row input:disabled {
    border-color: #c4c4c4;
}
.ref {
    flex: 1;
    display: flex;
    height: 20px;
    border: 1px solid #abadb3;
    background: #fff;
}
.ref input {
    flex: 1;
    min-width: 0;
    border: 0;
    padding: 0 3px;
    background: none;
}
.ref .selected {
    background: linear-gradient(#000, #000) 84px 3px / 1px 13px no-repeat,
        linear-gradient(#c0c0c0, #c0c0c0) 3px 3px / 81px 13px no-repeat;
}
.ref .empty {
    margin: 2px 5px 2px 3px;
    background: #f0f0f0;
}
.ref button {
    display: grid;
    place-items: center;
    width: 21px;
    background: #fff;
    border: 2px solid #c4c4c8;
}
.push {
    width: 74px;
    height: 22px;
    background: #e1e1e1;
    border: 1px solid #adadad;
}
.push:disabled {
    width: 148px;
    background: #d9d9d9;
    color: #838383;
}
.push.ok {
    border: 2px solid #0078d7;
}
.dialog footer {
    display: flex;
    justify-content: flex-end;
    gap: 10px;
    padding: 1px 1px 0 0;
}
.resize {
    position: absolute;
    right: 0;
    bottom: 0;
}

/* marks */
.mark-frame {
    position: absolute;
    left: 403px;
    top: 246px;
    width: 528px;
    height: 427px;
    border: 7px solid #f00;
    border-radius: 3px;
}
.mark-arrow {
    position: absolute;
    left: 40px;
    top: 90px;
}
.mark-step {
    position: absolute;
    left: 440px;
    color: #00f;
    font-size: 34px;
    line-height: 36px;
}
.one { top: 320px; }
.two { top: 369px; }
.three { top: 467px; }
.four { top: 565px; }
```
